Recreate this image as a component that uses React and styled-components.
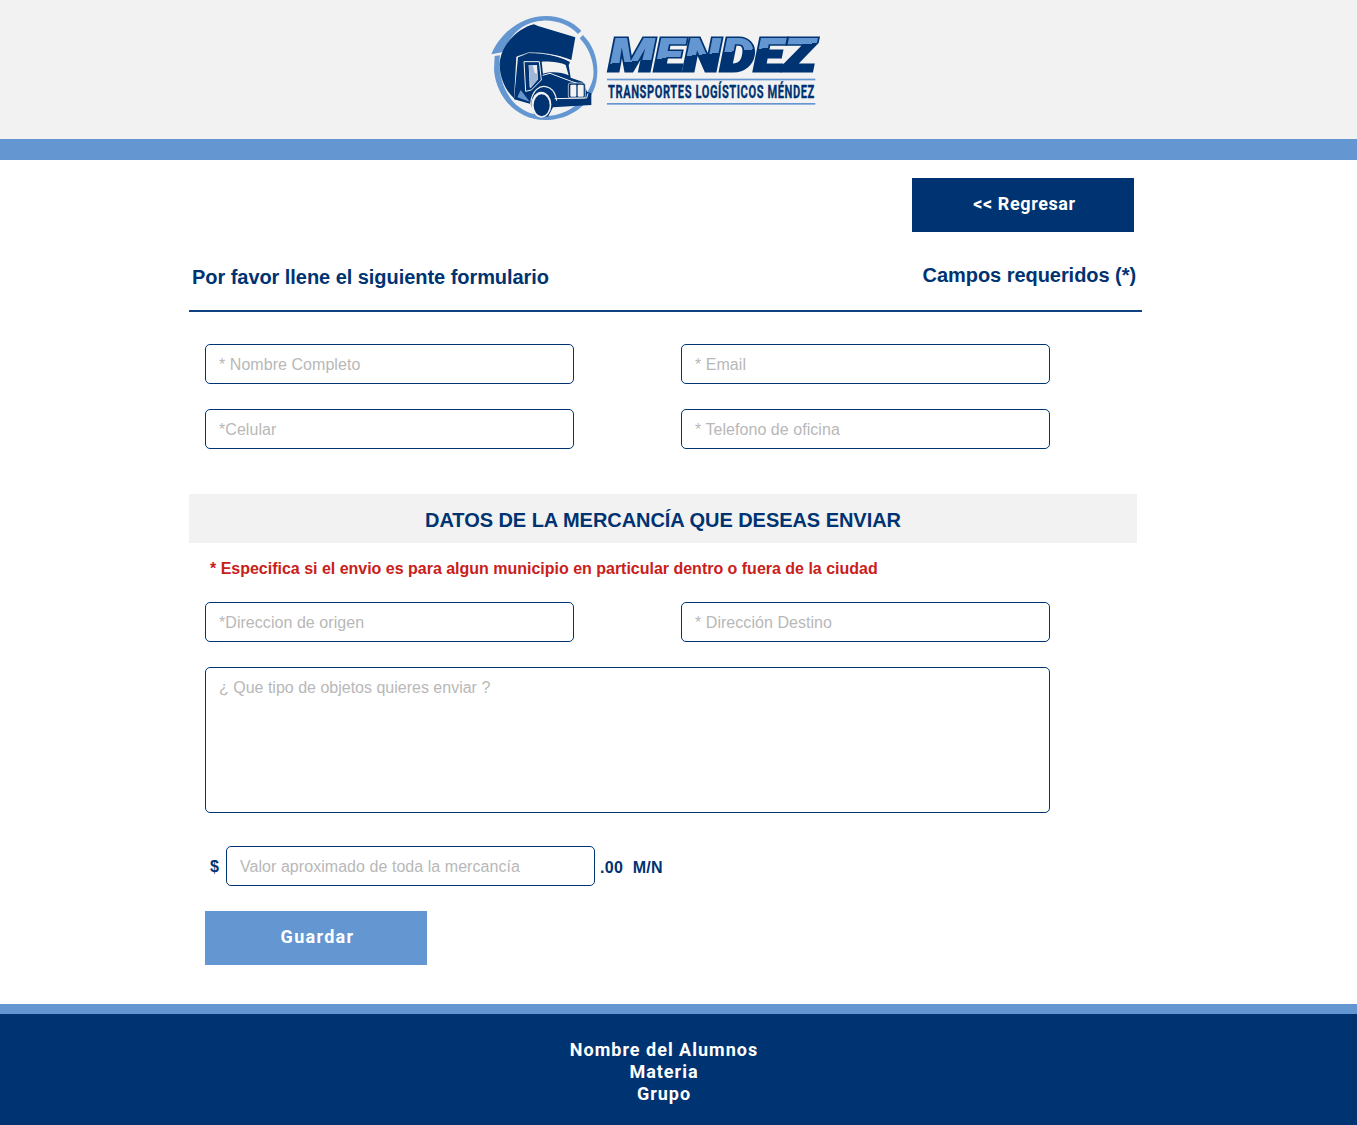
import React from "react";
import styled, { createGlobalStyle } from "styled-components";

const navy = "#003371";
const sky = "#6497d2";
const paper = "#f2f2f2";

const GlobalStyle = createGlobalStyle`
  html, body {
    margin: 0;
    padding: 0;
    background: #fff;
    font-family: "Liberation Sans", Arial, sans-serif;
  }
  * {
    box-sizing: border-box;
  }
`;

const Header = styled.header`
  height: 160px;
  background: ${paper};
  border-bottom: 21px solid ${sky};
  padding: 5px 0 0 480px;
`;

const Main = styled.main`
  width: 953px;
  margin-left: 189px;
  height: 844px;
  padding-top: 18px;
`;

const TopBar = styled.div`
  display: flex;
  justify-content: flex-end;
  padding-right: 8px;
`;

const BlockButton = styled.button`
  display: block;
  width: 222px;
  height: 54px;
  border: 0;
  border-radius: 0;
  padding: 0 0 3px 3px;
  background: ${(props) => props.$bg};
  color: #fff;
  font-family: Roboto, sans-serif;
  font-size: 18px;
  font-weight: 700;
  letter-spacing: ${(props) => props.$spacing}px;
`;

const TitleRow = styled.div`
  display: flex;
  justify-content: space-between;
  height: 80px;
  padding: 34px 6px 0 3px;
  border-bottom: 2px solid #0f4283;
  color: ${navy};
  font-weight: 700;
  font-size: 20px;
  letter-spacing: -0.05px;
`;

const Required = styled.span`
  margin-top: -2px;
`;

const Fields = styled.div`
  display: grid;
  grid-template-columns: 369px 369px;
  column-gap: 107px;
  row-gap: 25px;
  padding-left: 16px;
  margin-top: ${(props) => props.$top}px;
`;

const Input = styled.input`
  display: block;
  width: 369px;
  height: 40px;
  border: 1px solid ${navy};
  border-radius: 5px;
  padding: 2px 13px 0;
  background: #fff;
  font-family: "Liberation Sans", Arial, sans-serif;
  font-size: 16px;
  letter-spacing: 0.05px;
  outline: none;

  &::placeholder {
    color: #b8b8b8;
    opacity: 1;
  }
`;

const Band = styled.h2`
  width: 948px;
  height: 49px;
  margin: 45px 0 0;
  background: ${paper};
  color: ${navy};
  font-size: 20px;
  font-weight: 700;
  letter-spacing: -0.05px;
  line-height: 52px;
  text-align: center;
`;

const Note = styled.p`
  margin: 17px 0 0 21px;
  color: #c9201a;
  font-size: 16px;
  font-weight: 700;
  letter-spacing: -0.011px;
  line-height: 18px;
`;

const TextArea = styled.textarea`
  display: block;
  width: 845px;
  height: 146px;
  margin: 25px 0 0 16px;
  border: 1px solid ${navy};
  border-radius: 5px;
  padding: 11px 13px;
  background: #fff;
  font-family: "Liberation Sans", Arial, sans-serif;
  font-size: 16px;
  outline: none;
  resize: none;

  &::placeholder {
    color: #b8b8b8;
    opacity: 1;
  }
`;

const ValueRow = styled.div`
  display: flex;
  align-items: center;
  margin: 33px 0 0 21px;
  color: ${navy};
  font-size: 16px;
  font-weight: 700;
`;

const Currency = styled.span`
  width: 16px;
  padding-top: 2px;
`;

const Suffix = styled.span`
  margin-left: 5px;
  padding-top: 4px;
  letter-spacing: 0.3px;
  white-space: pre;
`;

const SaveWrap = styled.div`
  margin: 25px 0 0 16px;
`;

const Footer = styled.footer`
  height: 121px;
  background: ${navy};
  border-top: 10px solid ${sky};
  padding: 25px 29px 0 0;
  color: #fff;
  font-family: Roboto, sans-serif;
  font-size: 18px;
  font-weight: 700;
  letter-spacing: 1px;
  line-height: 22px;
  text-align: center;
`;

const Truck = () => (
  <g transform="translate(24 15)">
    {/* ring */}
    <path d="M10 133 C35 70 100 18 175 18 C215 18 255 35 280 62 L270 72 C245 45 205 30 165 32 C110 33 65 70 50 125 Z" fill={sky} />
    <path d="M285 75 C320 110 335 160 325 215 C310 285 245 330 170 330 C90 330 25 265 18 180 L20 138 L36 136 C30 180 40 240 85 285 C115 310 150 318 175 318 C240 318 300 270 315 205 C322 165 305 115 275 85 Z" fill={sky} />
    {/* cargo box */}
    <path d="M36 150 C45 100 90 55 138 43 L150 48 L262 82 L250 150 C200 130 140 124 85 140 L78 265 C50 240 30 190 36 150 Z" fill={navy} />
    {/* cab silhouette */}
    <path d="M90 142 L122 130 C170 130 212 137 246 156 L242 166 L248 203 L285 216 L297 245 L310 250 L310 285 L195 292 L180 320 L140 315 L128 282 L78 268 Z" fill={navy} />
    <path d="M88 140 L122 128 C170 128 212 135 246 154" fill="none" stroke={paper} strokeWidth="2" />
    <path d="M88 262 L125 275 L98 240 Z" fill={sky} />
    {/* side window */}
    <path d="M108 155 L154 155 L160 210 L130 240 L113 244 Z" fill={navy} stroke={paper} strokeWidth="3" />
    <path d="M122 166 L147 165 L150 208 L128 234 L125 232 Z" fill="#e8edf4" />
    <path d="M122 166 L134 166 L140 188 L148 192 L150 208 L128 234 Z" fill="#9fb6d4" />
    {/* windshield */}
    <path d="M161 155 C190 154 222 158 233 165 L242 196 C220 186 190 184 165 191 Z" fill={paper} />
    {/* hood line */}
    <path d="M164 196 L186 190 L250 214 L285 226" fill="none" stroke={paper} strokeWidth="3" />
    {/* grille */}
    <rect x="241" y="219" width="51" height="45" rx="6" fill={navy} stroke={paper} strokeWidth="2" />
    <rect x="247" y="224" width="18" height="36" rx="3" fill={paper} />
    <rect x="269" y="224" width="18" height="36" rx="3" fill={paper} />
    {/* fender and wheel */}
    <path d="M128 282 C130 245 155 218 185 234 C198 242 204 258 206 272" fill="none" stroke={paper} strokeWidth="3.5" />
    <path d="M200 266 L296 264 L300 250" fill="none" stroke={paper} strokeWidth="3" />
    <ellipse cx="160" cy="284" rx="30" ry="39" fill={paper} />
    <ellipse cx="161" cy="286" rx="24" ry="33" fill={navy} />
  </g>
);

const Logo = () => (
  <svg width="350" height="125" viewBox="0 0 1050 375" role="img" aria-label="Mendez">
    <defs>
      <linearGradient id="sweep" gradientUnits="userSpaceOnUse" x1="685" y1="96" x2="695" y2="196">
        <stop offset="50%" stopColor={sky} />
        <stop offset="50%" stopColor={navy} />
      </linearGradient>
    </defs>
    <Truck />
    {/* wordmark */}
    <text
      x="386"
      y="198"
      textLength="620"
      lengthAdjust="spacingAndGlyphs"
      fontFamily="Roboto, sans-serif"
      fontStyle="italic"
      fontWeight="900"
      fontSize="136"
      fill={navy}
      stroke={navy}
      strokeWidth="9"
    >
      MENDEZ
    </text>
    <text
      x="386"
      y="198"
      textLength="620"
      lengthAdjust="spacingAndGlyphs"
      fontFamily="Roboto, sans-serif"
      fontStyle="italic"
      fontWeight="900"
      fontSize="136"
      fill="url(#sweep)"
    >
      MENDEZ
    </text>
    <rect x="381" y="221" width="625" height="5" fill={sky} />
    <text
      transform="translate(384 280) scale(0.594 1)"
      fontFamily="Roboto, sans-serif"
      fontWeight="700"
      fontSize="56"
      letterSpacing="3"
      fill={navy}
      stroke={navy}
      strokeWidth="1"
    >
      TRANSPORTES LOGÍSTICOS MÉNDEZ
    </text>
    <rect x="381" y="294" width="625" height="5" fill={sky} />
  </svg>
);

export default function App() {
  return (
    <>
      <GlobalStyle />
      <Header>
        <Logo />
      </Header>
      <Main>
        <TopBar>
          <BlockButton $bg={navy} $spacing={0.6}>&lt;&lt; Regresar</BlockButton>
        </TopBar>
        <TitleRow>
          <span>Por favor llene el siguiente formulario</span>
          <Required>Campos requeridos (*)</Required>
        </TitleRow>
        <Fields $top={32}>
          <Input placeholder="* Nombre Completo" />
          <Input placeholder="* Email" />
          <Input placeholder="*Celular" />
          <Input placeholder="* Telefono de oficina" />
        </Fields>
        <Band>DATOS DE LA MERCANCÍA QUE DESEAS ENVIAR</Band>
        <Note>* Especifica si el envio es para algun municipio en particular dentro o fuera de la ciudad</Note>
        <Fields $top={24}>
          <Input placeholder="*Direccion de origen" />
          <Input placeholder="* Dirección Destino" />
        </Fields>
        <TextArea placeholder="¿ Que tipo de objetos quieres enviar ?" />
        <ValueRow>
          <Currency>$</Currency>
          <Input placeholder="Valor aproximado de toda la mercancía" />
          <Suffix>.00  M/N</Suffix>
        </ValueRow>
        <SaveWrap>
          <BlockButton $bg={sky} $spacing={1.3}>Guardar</BlockButton>
        </SaveWrap>
      </Main>
      <Footer>
        Nombre del Alumnos
        <br />
        Materia
        <br />
        Grupo
      </Footer>
    </>
  );
}
